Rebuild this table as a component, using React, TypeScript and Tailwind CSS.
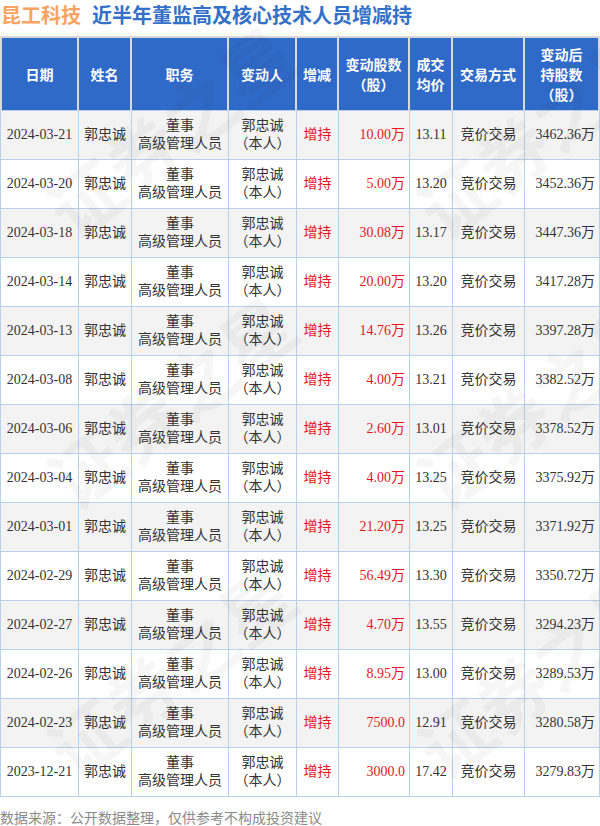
import React from "react";

const rows: [string, string, string, string, string][] = [
  ["2024-03-21", "10.00万", "13.11", "3462.36万", "g"],
  ["2024-03-20", "5.00万", "13.20", "3452.36万", "w"],
  ["2024-03-18", "30.08万", "13.17", "3447.36万", "g"],
  ["2024-03-14", "20.00万", "13.20", "3417.28万", "w"],
  ["2024-03-13", "14.76万", "13.26", "3397.28万", "g"],
  ["2024-03-08", "4.00万", "13.21", "3382.52万", "w"],
  ["2024-03-06", "2.60万", "13.01", "3378.52万", "g"],
  ["2024-03-04", "4.00万", "13.25", "3375.92万", "w"],
  ["2024-03-01", "21.20万", "13.25", "3371.92万", "g"],
  ["2024-02-29", "56.49万", "13.30", "3350.72万", "w"],
  ["2024-02-27", "4.70万", "13.55", "3294.23万", "g"],
  ["2024-02-26", "8.95万", "13.00", "3289.53万", "w"],
  ["2024-02-23", "7500.0", "12.91", "3280.58万", "g"],
  ["2023-12-21", "3000.0", "17.42", "3279.83万", "w"],
];

const th =
  "bg-[#306ac8] text-white font-bold text-[14px] leading-[20px] text-center align-middle border-t-2 border-r-2 border-b border-t-[#d6d6d6] border-r-[#d9d9d9] border-b-[#b7d1ea] px-1 font-[family-name:Noto_Sans_CJK_SC,sans-serif]";
const td =
  "h-[49px] text-[14px] leading-[18px] align-middle border-r border-b border-[#b7d1ea] px-1";
const mark =
  "absolute pointer-events-none select-none text-[72px] font-bold text-black/[0.035] whitespace-nowrap -translate-x-1/2 -translate-y-1/2 -rotate-[38deg] font-[family-name:Noto_Sans_CJK_SC,sans-serif]";

export default function App() {
  return (
    <div className="relative w-[600px] h-[826px] bg-white overflow-hidden font-[family-name:Liberation_Serif,Noto_Sans_CJK_SC,serif]">
      <div className="h-[36px] flex items-center gap-[11px] pl-[1px] pb-[6px] text-[20px] font-bold font-[family-name:Noto_Sans_CJK_SC,sans-serif]">
        <span className="text-[#f7a463]">昆工科技</span>
        <span className="text-[#3570c8]">近半年董监高及核心技术人员增减持</span>
      </div>
      <table className="table-fixed border-separate border-spacing-0 w-[600px]">
        <colgroup>
          <col className="w-[79px]" />
          <col className="w-[53px]" />
          <col className="w-[97px]" />
          <col className="w-[68px]" />
          <col className="w-[42px]" />
          <col className="w-[71px]" />
          <col className="w-[43px]" />
          <col className="w-[72px]" />
          <col className="w-[75px]" />
        </colgroup>
        <thead>
          <tr>
            <th className={`${th} h-[75px] border-l-2 border-l-[#d9d9d9]`}>日期</th>
            <th className={th}>姓名</th>
            <th className={th}>职务</th>
            <th className={th}>变动人</th>
            <th className={th}>增减</th>
            <th className={th}>
              变动股数
              <br />
              （股）
            </th>
            <th className={th}>
              成交
              <br />
              均价
            </th>
            <th className={th}>交易方式</th>
            <th className={th}>
              变动后
              <br />
              持股数
              <br />
              （股）
            </th>
          </tr>
        </thead>
        <tbody className="text-[#333333]">
          {rows.map(([date, amt, price, after, bg]) => (
            <tr key={date} className={bg === "g" ? "bg-[#f3f3f3]" : "bg-white"}>
              <td className={`${td} border-l text-center`}>{date}</td>
              <td className={`${td} text-center`}>郭忠诚</td>
              <td className={`${td} text-center`}>
                董事
                <br />
                高级管理人员
              </td>
              <td className={`${td} text-center`}>
                郭忠诚
                <br />
                （本人）
              </td>
              <td className={`${td} text-center text-[#e5161b]`}>增持</td>
              <td className={`${td} text-right pr-[4px] text-[#e5161b]`}>{amt}</td>
              <td className={`${td} text-center`}>{price}</td>
              <td className={`${td} text-center`}>竞价交易</td>
              <td className={`${td} text-right pr-[4px]`}>{after}</td>
            </tr>
          ))}
        </tbody>
      </table>
      <div className="mt-[10px] text-[14px] leading-[20px] text-[#8a8a8a] font-[family-name:Noto_Sans_CJK_SC,sans-serif]">
        数据来源：公开数据整理，仅供参考不构成投资建议
      </div>
      <div className={`${mark} left-[170px] top-[130px]`}>证券之星</div>
      <div className={`${mark} left-[540px] top-[130px]`}>证券之星</div>
      <div className={`${mark} left-[170px] top-[400px]`}>证券之星</div>
      <div className={`${mark} left-[540px] top-[400px]`}>证券之星</div>
      <div className={`${mark} left-[170px] top-[670px]`}>证券之星</div>
      <div className={`${mark} left-[540px] top-[670px]`}>证券之星</div>
    </div>
  );
}
